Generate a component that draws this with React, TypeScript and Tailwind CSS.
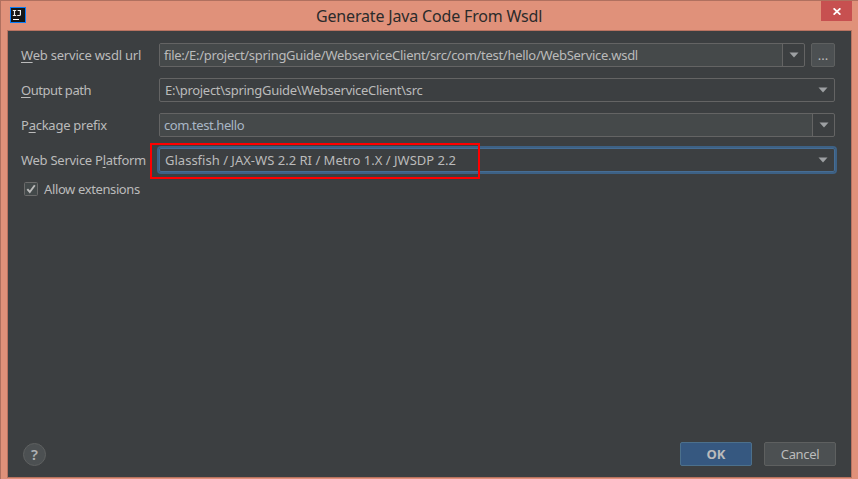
import type { ReactNode } from "react";
import clsx from "clsx";

function Arrow() {
  return (
    <svg width="10" height="6" viewBox="0 0 10 6" className="shrink-0">
      <path d="M0.5 0.5h9L5 5.5z" fill="#9da0a3" />
    </svg>
  );
}

function Row({ label, children }: { label: ReactNode; children: ReactNode }) {
  return (
    <div className="flex h-[25px] items-center">
      <div className="w-[138px] shrink-0 whitespace-nowrap">{label}</div>
      {children}
    </div>
  );
}

function Editable({ value, className, textClass }: { value: string; className: string; textClass: string }) {
  return (
    <div className={clsx("flex h-6 rounded-[2px] border border-[#646464]", className)}>
      <div className="flex flex-1 items-center bg-[#45494a] pl-[4px]">
        <span className={clsx("whitespace-nowrap", textClass)}>{value}</span>
      </div>
      <div className="flex w-[22px] items-center justify-center border-l border-[#646464]">
        <Arrow />
      </div>
    </div>
  );
}

function Select({ value, focused, textClass }: { value: string; focused?: boolean; textClass: string }) {
  return (
    <div
      className={clsx(
        "flex h-6 w-[676px] items-center justify-between rounded-[2px] border pr-[6px] pl-[5px]",
        focused ? "border-[#466d94] shadow-[0_0_0_2px_#3d6185]" : "border-[#646464]",
      )}
    >
      <span className={clsx("whitespace-nowrap", textClass)}>{value}</span>
      <Arrow />
    </div>
  );
}

function Key({ children }: { children: string }) {
  return <span className="underline decoration-1 underline-offset-2 [text-decoration-skip-ink:none]">{children}</span>;
}

export default function App() {
  return (
    <div className="relative flex h-[479px] w-[858px] flex-col overflow-hidden border-t border-l border-[#b0705f] bg-[#e0917a] font-['Noto_Sans','Open_Sans',sans-serif] text-[13px] leading-5 text-[#bbbbbb]">
      <header className="flex h-[29px] items-start">
        <svg width="16" height="16" viewBox="0 0 16 16" className="mt-[6px] ml-[9px] shrink-0">
          <rect width="16" height="16" fill="#087cfa" />
          <rect x="1" y="1" width="14" height="14" fill="#161616" />
          <path d="M2.8 3.5h3.4M4.5 3v6M2.8 8.5h3.4M7.6 3.5h3.4M10.4 3v4.4q0 1.1-1.2 1.1H7.2" fill="none" stroke="#f0f0f0" strokeWidth="1.2" />
          <rect x="3" y="12" width="6" height="1" fill="#fff" />
        </svg>
        <h1 className="flex-1 pt-[3px] pl-[290px] text-[16px] leading-6 tracking-[-0.17px] text-[#2b2b2b]">
          Generate Java Code From Wsdl
        </h1>
        <button className="mr-[6px] flex h-5 w-[31px] items-center justify-center bg-[#c75050] pt-px" aria-label="Close">
          <svg width="8" height="7" viewBox="0 0 8 7">
            <path d="M0.6 0.3l6.8 6.4M7.4 0.3L0.6 6.7" stroke="#fff" strokeWidth="1.7" />
          </svg>
        </button>
      </header>

      <main className="mr-[6px] mb-px ml-[6px] flex flex-1 flex-col border border-[#b97361] bg-[#3c3f41] pt-[11px] pr-[15px] pb-[11px] pl-[13px]">
        <div className="flex flex-col gap-[10px]">
          <Row label={<span className="tracking-[-0.21px]"><Key>W</Key>eb service wsdl url</span>}>
            <Editable
              value="file:/E:/project/springGuide/WebserviceClient/src/com/test/hello/WebService.wsdl"
              className="w-[646px]"
              textClass="tracking-[-0.29px]"
            />
            <button className="ml-[6px] h-6 w-6 rounded-[2px] border border-[#5e6060] bg-[#4c5052] leading-[22px]">...</button>
          </Row>
          <Row label={<span className="tracking-[-0.45px]"><Key>O</Key>utput path</span>}>
            <Select value="E:\project\springGuide\WebserviceClient\src" textClass="tracking-[-0.29px]" />
          </Row>
          <Row label={<span className="tracking-[-0.25px]">P<Key>a</Key>ckage prefix</span>}>
            <Editable value="com.test.hello" className="w-[676px]" textClass="tracking-[-0.43px] text-[#a9b7c6]" />
          </Row>
          <Row label={<span className="tracking-[-0.27px]">Web Service P<Key>l</Key>atform</span>}>
            <Select value="Glassfish / JAX-WS 2.2 RI / Metro 1.X / JWSDP 2.2" focused textClass="tracking-[0.01px]" />
          </Row>
        </div>

        <div className="mt-[7px] flex h-5 items-center pl-[3px]">
          <svg width="14" height="14" viewBox="0 0 14 14">
            <rect x="0.5" y="0.5" width="13" height="13" rx="1" fill="#43494a" stroke="#6b6b6b" />
            <path d="M3.3 7.2l2.5 2.8L10.8 3.3" fill="none" stroke="#bbbbbb" strokeWidth="1.9" />
          </svg>
          <span className="ml-[6px] tracking-[-0.38px]">Allow extensions</span>
        </div>

        <footer className="mt-auto flex items-center">
          <button className="ml-[2px] h-[23px] w-[23px] rounded-full border border-[#5e6060] bg-[#4c5052] text-[15px] leading-[21px] font-semibold text-[#afb1b3]">
            ?
          </button>
          <button className="ml-auto h-6 w-[72px] rounded-[2px] border border-[#4c708c] bg-[#365880] leading-[22px] font-bold">
            OK
          </button>
          <button className="ml-3 h-6 w-[72px] rounded-[2px] border border-[#5e6060] bg-[#4c5052] leading-[22px] tracking-[-0.33px]">
            Cancel
          </button>
        </footer>
      </main>

      <div className="pointer-events-none absolute top-[142px] left-[149px] h-[36px] w-[330px] border-2 border-[#ff0000]" />
    </div>
  );
}
